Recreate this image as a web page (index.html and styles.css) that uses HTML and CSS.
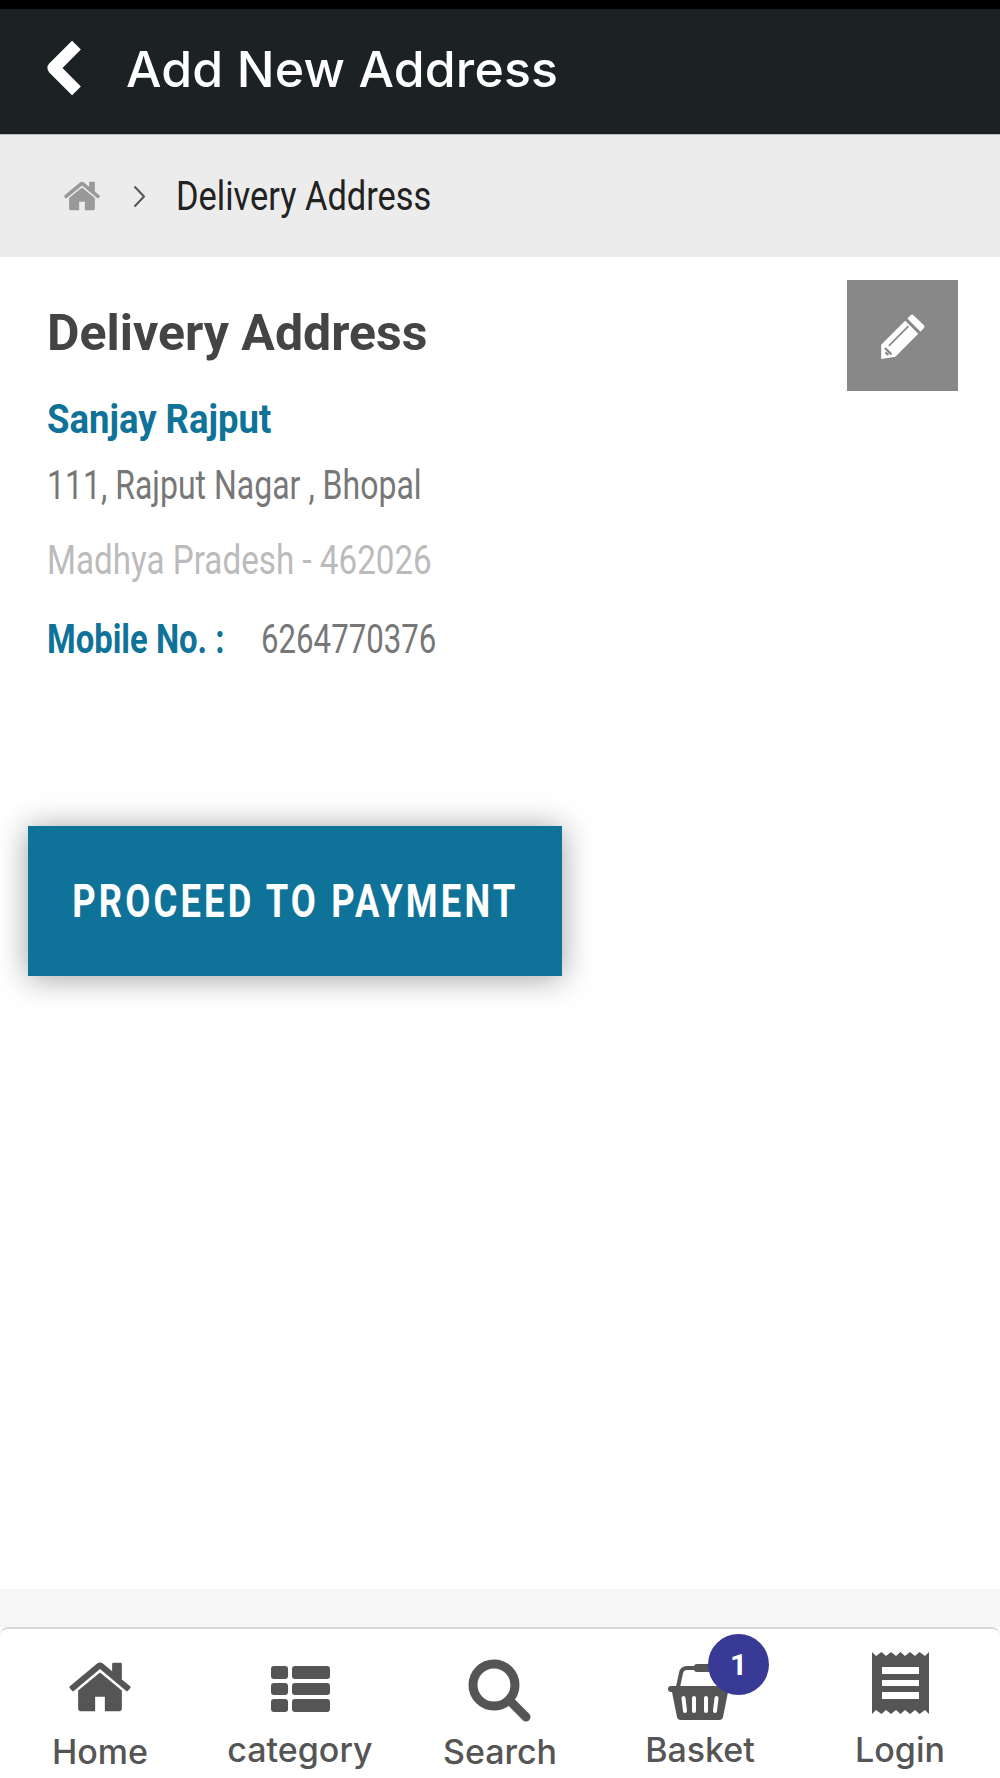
FILE: index.html
```html
<!DOCTYPE html>
<html lang="en">
<head>
    <meta charset="UTF-8">
    <meta name="viewport" content="width=device-width, initial-scale=1.0">
    <title>Add New Address</title>
    <link rel="stylesheet" href="styles.css">
</head>
<body>
    <div class="page">
        <div class="status-bar"></div>
        <header class="top-bar">
            <svg class="back-icon" viewBox="0 0 37 54"><path d="M31 5 L9 27 L31 49" fill="none" stroke="#fff" stroke-width="12" stroke-linejoin="round"/></svg>
            <h1 class="top-title">Add New Address</h1>
        </header>
        <nav class="crumbs">
            <svg class="crumb-home" viewBox="0 0 1792 1792"><path d="M1472 992v480q0 26-19 45t-45 19h-384v-384h-256v384h-384q-26 0-45-19t-19-45v-480q0-1 .5-3t.5-3l575-474 575 474q1 2 1 6zm223-69l-62 74q-8 9-21 11h-3q-13 0-21-7l-692-577-692 577q-12 8-24 7-13-2-21-11l-62-74q-8-10-7-23.500t11-21.500l719-599q32-26 76-26t76 26l244 204v-195q0-14 9-23t23-9h192q14 0 23 9t9 23v408l219 182q10 8 11 21.500t-7 23.500z"/></svg>
            <svg class="crumb-sep" viewBox="0 0 12 23"><path d="M1.500 1.500 L11 11.500 L1.500 21.500" fill="none" stroke="#555" stroke-width="2"/></svg>
            <span class="crumb-text">Delivery Address</span>
        </nav>
        <main class="content">
            <section class="address">
                <button class="edit-btn" type="button">
                    <svg viewBox="0 0 44 44"><path d="M31 2.500 L41 12 Q42.500 13.500 41 15 L38 18 L26 6 L29 3 Q30 2 31 2.500 Z M24 8 L36 20 L15 41 L2 43 L2 30 Z" fill="#fff"/><path d="M9 31 L27 13" stroke="#888" stroke-width="1.500"/><path d="M5.500 33 L11.500 39 M6 37 L8.500 39.500" stroke="#888" stroke-width="2"/></svg>
                </button>
                <h2 class="address-title">Delivery Address</h2>
                <p class="name">Sanjay Rajput</p>
                <p class="line line-dark">111, Rajput Nagar , Bhopal</p>
                <p class="line line-light">Madhya Pradesh - 462026</p>
                <p class="mobile"><span class="mobile-label">Mobile No. :</span><span class="mobile-num">6264770376</span></p>
            </section>
            <button class="pay-btn" type="button"><span class="pay-text">PROCEED TO PAYMENT</span></button>
        </main>
        <div class="band"></div>
        <footer class="bottom-nav">
            <a class="nav-item item-low">
                <svg class="nav-icon icon-home" viewBox="0 0 1792 1792"><path d="M1472 992v480q0 26-19 45t-45 19h-384v-384h-256v384h-384q-26 0-45-19t-19-45v-480q0-1 .5-3t.5-3l575-474 575 474q1 2 1 6zm223-69l-62 74q-8 9-21 11h-3q-13 0-21-7l-692-577-692 577q-12 8-24 7-13-2-21-11l-62-74q-8-10-7-23.500t11-21.500l719-599q32-26 76-26t76 26l244 204v-195q0-14 9-23t23-9h192q14 0 23 9t9 23v408l219 182q10 8 11 21.500t-7 23.500z"/></svg>
                <span>Home</span>
            </a>
            <a class="nav-item">
                <svg class="nav-icon icon-list" viewBox="0 0 59 46"><rect x="0" y="0" width="17" height="13" rx="3"/><rect x="21" y="0" width="38" height="13" rx="3"/><rect x="0" y="17" width="17" height="12" rx="3"/><rect x="21" y="17" width="38" height="12" rx="3"/><rect x="0" y="33" width="17" height="13" rx="3"/><rect x="21" y="33" width="38" height="13" rx="3"/></svg>
                <span>category</span>
            </a>
            <a class="nav-item item-low">
                <svg class="nav-icon icon-search" viewBox="0 0 64 64"><circle cx="26" cy="26" r="21" fill="none" stroke="#555" stroke-width="9"/><path d="M42 42 L58 58" stroke="#555" stroke-width="9" stroke-linecap="round"/></svg>
                <span>Search</span>
            </a>
            <a class="nav-item">
                <span class="basket-wrap">
                    <svg class="nav-icon icon-basket" viewBox="0 0 64 60"><path d="M10 26 L13 12 Q14 7 19 7 L28 7" fill="none" stroke="#555" stroke-width="4"/><rect x="26" y="3" width="24" height="8" rx="3"/><path d="M3 25 H61 Q64 25 64 28 Q64 31 61 31 H60 L55 56 Q54.500 59 51 59 H13 Q9.500 59 9 56 L4 31 H3 Q0 31 0 28 Q0 25 3 25 Z"/><path d="M15.500 37 L17 50 M26 37 V50 M38 37 V50 M48.500 37 L47 50" stroke="#fff" stroke-width="4" stroke-linecap="round"/></svg>
                    <span class="badge">1</span>
                </span>
                <span>Basket</span>
            </a>
            <a class="nav-item">
                <svg class="nav-icon icon-receipt" viewBox="0 0 57 62"><path fill-rule="evenodd" d="M0 0 L4 4 L9.500 0 L14 4 L19 0 L24 4 L28.500 0 L33 4 L38 0 L43 4 L47.500 0 L53 4 L57 0 V62 L53 58 L47.500 62 L43 58 L38 62 L33 58 L28.500 62 L24 58 L19 62 L14 58 L9.500 62 L4 58 L0 62 Z M10 15 V22 H47 V15 Z M10 28 V34 H47 V28 Z M10 40 V47 H47 V40 Z"/></svg>
                <span>Login</span>
            </a>
        </footer>
    </div>
</body>
</html>
```
FILE: styles.css
```css
* {
    box-sizing: border-box;
}

html, body {
    margin: 0;
    padding: 0;
}

body {
    background-color: #fff;
    font-family: Roboto, sans-serif;
}

.page {
    width: 1000px;
    height: 1778px;
    display: flex;
    flex-direction: column;
    overflow: hidden;
}

.status-bar {
    height: 9px;
    background-color: #000;
}

.top-bar {
    height: 126px;
    padding: 0 0 6px 44px;
    display: flex;
    align-items: center;
    background-color: #1c2124;
    border-bottom: 1px solid #b9bbbb;
}

.back-icon {
    width: 39px;
    height: 56px;
    margin-bottom: 2px;
}

.top-title {
    margin: 0 0 0 43px;
    color: #fff;
    font-family: Inter, sans-serif;
    font-size: 50px;
    font-weight: 500;
    letter-spacing: 0.15px;
}

.crumbs {
    height: 122px;
    padding-left: 62px;
    display: flex;
    align-items: center;
    background-color: #ececec;
}

.crumb-home {
    width: 40px;
    height: 40px;
    fill: #999;
}

.crumb-sep {
    width: 12px;
    height: 23px;
    margin-left: 31px;
}

.crumb-text {
    margin-left: 31px;
    color: #222;
    font-size: 40px;
    transform: scaleX(0.86);
    transform-origin: left;
}

.content {
    flex: 1;
    padding: 0 28px;
}

.address {
    position: relative;
    height: 569px;
    padding: 48px 0 0 19px;
}

.edit-btn {
    position: absolute;
    top: 23px;
    right: 14px;
    width: 111px;
    height: 111px;
    padding: 0;
    border: none;
    display: flex;
    align-items: center;
    justify-content: center;
    background-color: #888;
}

.edit-btn svg {
    width: 48px;
    height: 48px;
}

.address-title {
    margin: 0;
    color: #444;
    font-size: 50px;
    font-weight: 700;
    line-height: 56px;
}

.name,
.line,
.mobile {
    transform-origin: left;
    font-size: 40px;
    line-height: 46px;
}

.name {
    margin: 36px 0 0;
    color: #0f7299;
    font-weight: 700;
    transform: scaleX(0.912);
}

.line {
    margin: 0;
}

.line-dark {
    margin-top: 20px;
    color: #777;
    transform: scaleX(0.80);
}

.line-light {
    margin-top: 29px;
    color: #bbb;
    transform: scaleX(0.83);
}

.mobile {
    margin: 33px 0 0;
    display: flex;
}

.mobile-label {
    color: #0f7299;
    font-weight: 700;
    transform: scaleX(0.82);
    transform-origin: left;
}

.mobile-num {
    margin-left: -2px;
    color: #777;
    transform: scaleX(0.78);
    transform-origin: left;
}

.pay-btn {
    display: flex;
    align-items: center;
    justify-content: center;
    width: 534px;
    height: 150px;
    padding: 0;
    border: none;
    background-color: #0f7299;
    box-shadow: 0 2px 30px rgba(0, 0, 0, 0.38);
    color: #fff;
    font-family: Roboto, sans-serif;
    font-size: 46px;
    font-weight: 700;
    letter-spacing: 4px;
}

.pay-text {
    flex: none;
    white-space: nowrap;
    transform: scaleX(0.79);
}

.band {
    height: 38px;
    background-color: #f7f7f7;
}

.bottom-nav {
    height: 151px;
    display: grid;
    grid-template-columns: repeat(5, 200px);
    background-color: #fff;
    border-top: 2px solid #d8d8d8;
    border-radius: 8px 8px 0 0;
}

.nav-item {
    position: relative;
    display: flex;
    flex-direction: column;
    align-items: center;
    justify-content: flex-end;
    padding-bottom: 8px;
    color: #555;
    font-family: Inter, sans-serif;
    font-size: 34px;
    font-weight: 500;
}

.nav-item.item-low {
    padding-bottom: 6px;
}

.nav-icon {
    display: block;
    fill: #555;
}

.icon-home {
    width: 68px;
    height: 68px;
    margin-bottom: 10px;
}

.icon-list {
    width: 59px;
    height: 46px;
    margin-bottom: 17px;
}

.icon-search {
    width: 64px;
    height: 64px;
    margin-bottom: 8px;
}

.basket-wrap {
    position: relative;
    display: block;
    margin-bottom: 8px;
}

.icon-basket {
    width: 64px;
    height: 60px;
}

.badge {
    position: absolute;
    top: -27px;
    left: 40px;
    width: 61px;
    height: 61px;
    border-radius: 50%;
    display: flex;
    align-items: center;
    justify-content: center;
    background-color: #383a96;
    color: #fff;
    font-family: Roboto, sans-serif;
    font-size: 30px;
    font-weight: 700;
}

.icon-receipt {
    width: 57px;
    height: 62px;
    margin-bottom: 15px;
}
```
